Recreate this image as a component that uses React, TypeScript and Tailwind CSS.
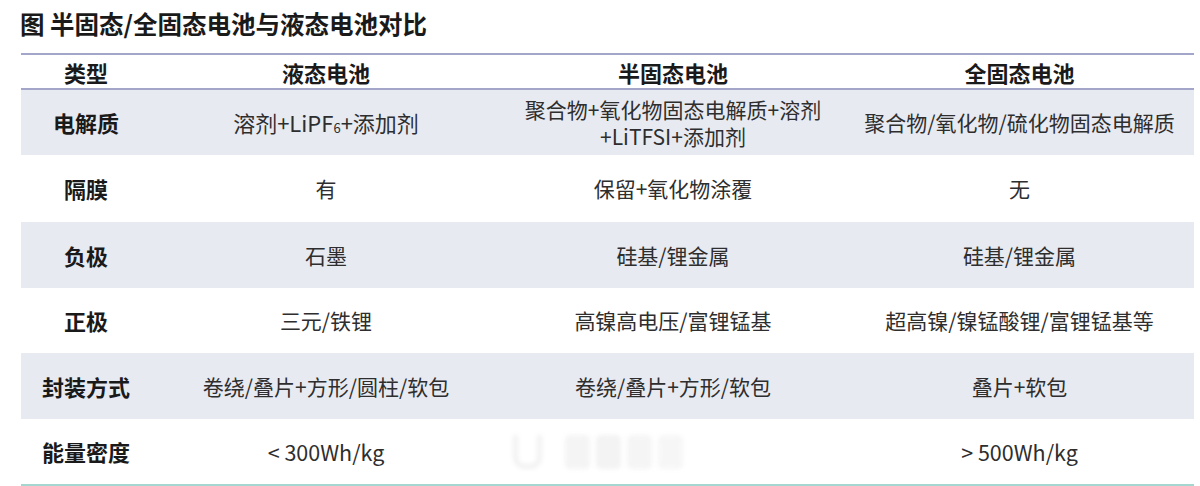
import React from "react";

const font = { fontFamily: '"Noto Sans CJK SC", "Noto Sans", sans-serif' };

type Row = { label: string; cells: React.ReactNode[]; h: string; band: boolean };

function Smudge() {
  return (
    <div className="flex items-center gap-[6px] blur-[2px] opacity-70">
      <div className="w-[29px] h-[34px] rounded-b-[12px] border-x-[5px] border-b-[5px] border-[#ececec] mr-[17px]" />
      <div className="w-[25px] h-[34px] rounded-[5px] bg-[#f0f0f0]" />
      <div className="w-[25px] h-[34px] rounded-[5px] bg-[#eeeeee]" />
      <div className="w-[25px] h-[34px] rounded-[5px] bg-[#f1f1f1]" />
      <div className="w-[25px] h-[34px] rounded-[5px] bg-[#f3f3f3]" />
    </div>
  );
}

const rows: Row[] = [
  {
    label: "电解质",
    h: "h-[65px]",
    band: true,
    cells: [
      <span key="a" className="text-[22px]">
        溶剂+LiPF<span className="text-[13px] align-[-1px]">6</span>+添加剂
      </span>,
      <span key="b" className="block leading-[27px]">
        聚合物+氧化物固态电解质+溶剂
        <br />
        +LiTFSI+添加剂
      </span>,
      <span key="c">聚合物/氧化物/硫化物固态电解质</span>,
    ],
  },
  { label: "隔膜", h: "h-[67px]", band: false, cells: ["有", "保留+氧化物涂覆", "无"] },
  { label: "负极", h: "h-[66px]", band: true, cells: ["石墨", "硅基/锂金属", "硅基/锂金属"] },
  {
    label: "正极",
    h: "h-[65px]",
    band: false,
    cells: ["三元/铁锂", "高镍高电压/富锂锰基", "超高镍/镍锰酸锂/富锂锰基等"],
  },
  {
    label: "封装方式",
    h: "h-[66px]",
    band: true,
    cells: ["卷绕/叠片+方形/圆柱/软包", "卷绕/叠片+方形/软包", "叠片+软包"],
  },
  {
    label: "能量密度",
    h: "h-[65px]",
    band: false,
    cells: [
      <span key="l" className="text-[21.5px]">&lt; 300Wh/kg</span>,
      <Smudge key="s" />,
      <span key="r" className="text-[21.5px]">&gt; 500Wh/kg</span>,
    ],
  },
];

export default function App() {
  return (
    <div className="w-[1200px] h-[486px] bg-white overflow-hidden" style={font}>
      <div className="h-[53px] pl-[20px] pt-[8px]">
        <h1 className="text-[24.5px] leading-[32px] font-bold text-[#1a1a1a]">
          图 半固态/全固态电池与液态电池对比
        </h1>
      </div>
      <div className="ml-[21px] w-[1173px]">
        <div className="grid grid-cols-[130px_350px_344px_349px] h-[37px] border-t-2 border-b-2 border-[#a3a6c9] text-[22px] font-bold text-[#1a1a1a]">
          {["类型", "液态电池", "半固态电池", "全固态电池"].map((t) => (
            <div key={t} className="flex items-center justify-center leading-none">
              {t}
            </div>
          ))}
        </div>
        {rows.map((r) => (
          <div
            key={r.label}
            className={`grid grid-cols-[130px_350px_344px_349px] ${r.h} ${r.band ? "bg-[#e8eaf2]" : "bg-white"}`}
          >
            <div className="flex items-center justify-center text-[22px] font-bold text-[#1a1a1a]">
              {r.label}
            </div>
            {r.cells.map((c, i) => (
              <div
                key={i}
                className={`flex items-center text-center text-[21px] text-[#2e2e2e] leading-none ${
                  r.label === "能量密度" && i === 1 ? "justify-start pl-[12px]" : "justify-center"
                }`}
              >
                {c}
              </div>
            ))}
          </div>
        ))}
        <div className="h-[2px] bg-[#a6d6d0]" />
      </div>
    </div>
  );
}
